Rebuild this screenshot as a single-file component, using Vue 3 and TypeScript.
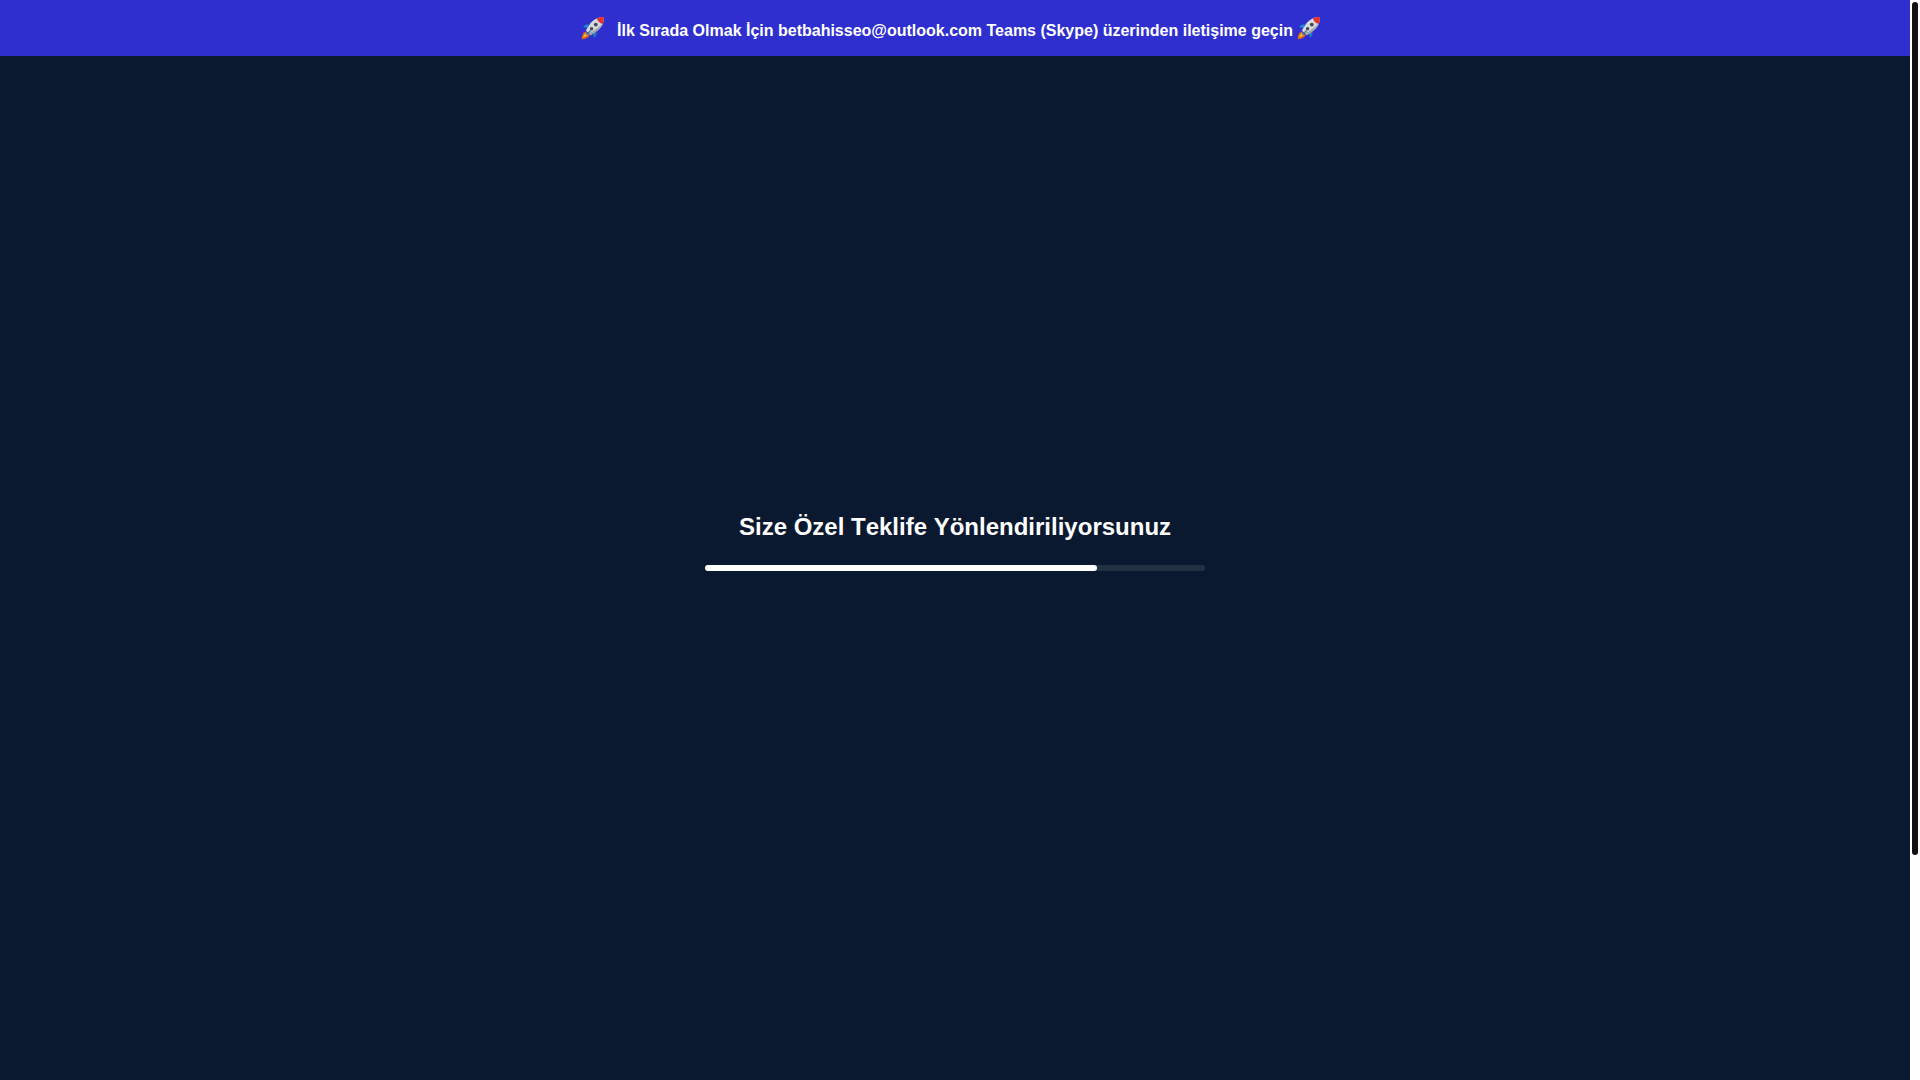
<script setup lang="ts">
import { h } from 'vue'

const progress = 78.4

const Rocket = () =>
  h('svg', { viewBox: '0 0 24 24', width: 24, height: 24, 'aria-hidden': 'true' }, [
    h('path', { d: 'M8 8.6C5.4 8.2 3.6 9 2 11l4.600 1z', fill: '#1c8fd0' }),
    h('path', { d: 'M15.4 15.4c.6 2.6-.2 4.6-2.4 6.6l-1.2-4.8z', fill: '#1c7fc0' }),
    h('path', { d: 'M4.2 15.4C1.8 16.8.9 19.4.6 23.2c3.8-.2 6.6-1.4 8-3.8z', fill: '#e0661c' }),
    h('path', { d: 'M5 17.2c-1.6 1-2.4 2.4-2.8 4 1.8-.3 3.4-1 4.4-2.4z', fill: '#fbc62f' }),
    h('path', { d: 'M22.9.9C16.6 1 12.6 3.4 9.4 7.3L4.8 14.4l4.8 4.8 7.1-4.7C20.6 11.2 22.9 7.3 22.9.9z', fill: '#d8d9dc' }),
    h('path', { d: 'M21.3 7.7c-1 2.7-2.5 4.9-4.6 6.8L9.6 19.2l-2.2-2.2C13 15.2 17.2 12 21.3 7.7z', fill: '#a2a3aa' }),
    h('path', { d: 'M22.9.9c-2.7 0-5 .4-7 1.3.6 3 2.8 5.2 5.7 5.7C22.5 5.8 22.9 3.5 22.9.9z', fill: '#e5322d' }),
    h('circle', { cx: 14.8, cy: 8.6, r: 1.9, fill: '#434b57' }),
    h('circle', { cx: 10.6, cy: 12.8, r: 1.7, fill: '#434b57' }),
    h('path', { d: 'M9.2 13.9l1 1-4.7 4.3-.7-.7z', fill: '#237fad' }),
  ])
</script>

<template>
  <div class="page">
    <div class="view">
      <header class="banner">
        <Rocket />
        <strong class="message">İlk Sırada Olmak İçin betbahisseo@outlook.com Teams (Skype) üzerinden iletişime geçin</strong>
        <Rocket />
      </header>
      <main class="loader">
        <h1 id="status" class="title">Size Özel Teklife Yönlendiriliyorsunuz</h1>
        <div class="track" role="progressbar" aria-labelledby="status" :aria-valuenow="progress">
          <div class="fill" :style="{ width: progress + '%' }"></div>
        </div>
      </main>
    </div>
    <div class="scrollbar" aria-hidden="true">
      <div class="thumb"></div>
    </div>
  </div>
</template>

<style>
body {
  margin: 0;
  background: #0a192f;
}
</style>

<style scoped>
.page {
  display: flex;
  min-height: 100vh;
  font-family: "Liberation Sans", Arial, sans-serif;
  color: #fff;
}

.view {
  display: grid;
  flex: 1;
  min-width: 0;
}

.banner {
  z-index: 1;
  grid-area: 1 / 1;
  align-self: start;
  display: flex;
  justify-content: center;
  align-items: center;
  box-sizing: border-box;
  min-height: 56px;
  padding-right: 8px;
  background: #2f2fd0;
}

.message {
  padding-top: 6px;
  margin: 0 4px 0 12px;
  font-size: 16px;
  line-height: 20px;
}

.loader {
  grid-area: 1 / 1;
  display: flex;
  flex-direction: column;
  align-items: center;
  justify-content: center;
}

.title {
  margin: 0 0 20px;
  font-size: 24px;
  line-height: 36px;
  font-kerning: none;
}

.track {
  width: 500px;
  max-width: 90%;
  height: 6px;
  border-radius: 3px;
  background: #233145;
}

.fill {
  height: 100%;
  border-radius: 3px;
  background: #fff;
}

.scrollbar {
  width: 10px;
  background: #fff;
}

.thumb {
  height: 79vh;
  margin: 2px;
  border-radius: 3px;
  background: #111;
}
</style>
